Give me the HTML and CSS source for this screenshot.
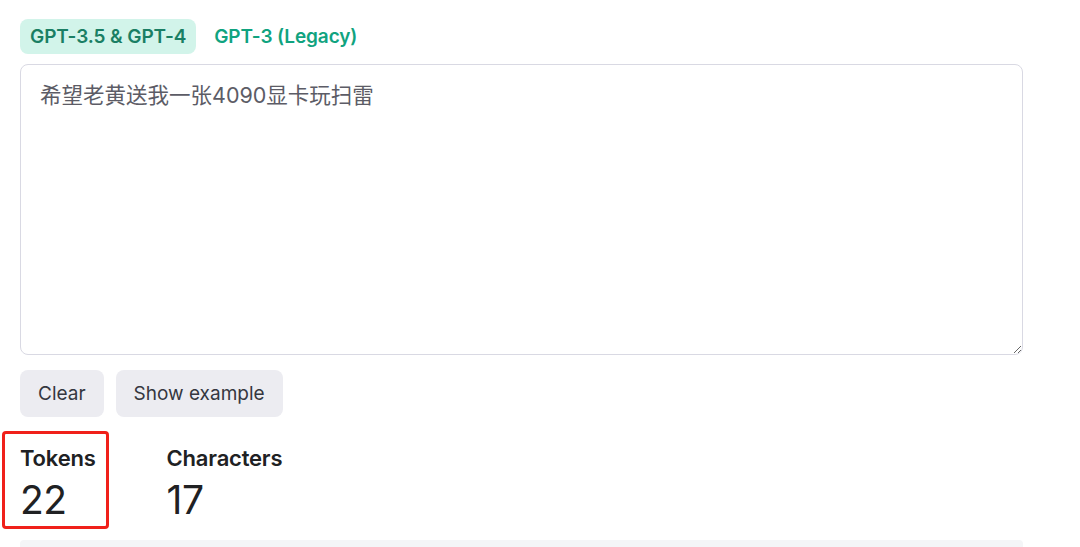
FILE: index.html
```html
<!DOCTYPE html>
<html lang="zh-CN">
<head>
<meta charset="utf-8">
<title>Tokenizer</title>
<link rel="stylesheet" href="styles.css">
</head>
<body>
<main class="page">
  <div class="tabs">
    <button class="tab tab-active">GPT-3.5 &amp; GPT-4</button>
    <button class="tab">GPT-3 (Legacy)</button>
  </div>
  <textarea class="editor" spellcheck="false">希望老黄送我一张4090显卡玩扫雷</textarea>
  <div class="actions">
    <button class="btn">Clear</button>
    <button class="btn">Show example</button>
  </div>
  <div class="stats">
    <div class="stat stat-highlight">
      <div class="stat-label">Tokens</div>
      <div class="stat-value">22</div>
    </div>
    <div class="stat">
      <div class="stat-label">Characters</div>
      <div class="stat-value">17</div>
    </div>
  </div>
  <div class="output"></div>
</main>
</body>
</html>
```
FILE: styles.css
```css
*, *::before, *::after { box-sizing: border-box; }
html, body { margin: 0; padding: 0; background: #ffffff; }
body {
  font-family: "Inter", "Noto Sans CJK SC", sans-serif;
  color: #202123;
  overflow: hidden;
}
.page {
  width: 1003px;
  margin-left: 20px;
  padding-top: 19px;
}
.tabs {
  display: flex;
  gap: 0;
  height: 35px;
}
.tab {
  font-family: inherit;
  font-size: 19px;
  font-weight: 600;
  letter-spacing: -0.1px;
  color: #10a37f;
  background: transparent;
  border: 0;
  border-radius: 8px;
  padding: 0 10px;
  height: 35px;
}
.tab + .tab { margin-left: 8px; }
.tab-active {
  color: #1a7f64;
  background: #d2f4ea;
}
.editor {
  display: block;
  width: 1003px;
  height: 291px;
  margin: 10px 0 0;
  padding: 16px 19px;
  border: 1px solid #d9d9e3;
  border-radius: 8px;
  font-family: "Inter", "Noto Sans CJK SC", sans-serif;
  font-size: 21.5px;
  line-height: 28px;
  color: #5c5c66;
  resize: vertical;
  outline: none;
}
.actions {
  display: flex;
  gap: 12px;
  margin-top: 15px;
}
.btn {
  font-family: inherit;
  font-size: 19px;
  color: #353740;
  background: #ececf1;
  border: 0;
  border-radius: 8px;
  height: 47px;
  padding: 0 18px;
}
.stats {
  display: flex;
  gap: 71px;
  margin-top: 27px;
}
.stat-highlight { position: relative; }
.stat-highlight::after {
  content: "";
  position: absolute;
  left: -18px;
  top: -13px;
  width: 107px;
  height: 98px;
  border: 3px solid #f0201a;
  border-radius: 4px;
}
.stat-label {
  font-size: 22px;
  font-weight: 600;
  line-height: 28px;
  letter-spacing: -0.2px;
  color: #202123;
}
.stat-value {
  font-size: 39px;
  line-height: 44px;
  margin-top: 6px;
  letter-spacing: -0.5px;
  color: #202123;
}
.output {
  margin-top: 18px;
  height: 7px;
  background: #f4f5f7;
  border-radius: 4px 4px 0 0;
}
```
